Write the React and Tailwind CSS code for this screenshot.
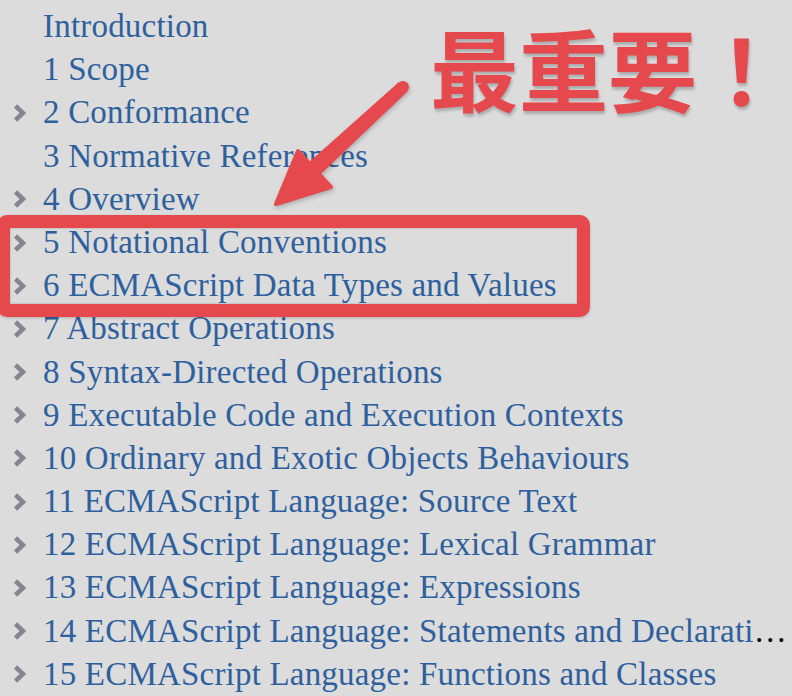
// Table of contents with a red "最重要！" call-out drawn over it:
// a pointing arrow and a box round sections 5 and 6.

const ITEMS = [
  { label: "Introduction", folder: false },
  { label: "1 Scope", folder: false },
  { label: "2 Conformance", folder: true },
  { label: "3 Normative References", folder: false },
  { label: "4 Overview", folder: true },
  { label: "5 Notational Conventions", folder: true },
  { label: "6 ECMAScript Data Types and Values", folder: true },
  { label: "7 Abstract Operations", folder: true },
  { label: "8 Syntax-Directed Operations", folder: true },
  { label: "9 Executable Code and Execution Contexts", folder: true },
  { label: "10 Ordinary and Exotic Objects Behaviours", folder: true },
  { label: "11 ECMAScript Language: Source Text", folder: true },
  { label: "12 ECMAScript Language: Lexical Grammar", folder: true },
  { label: "13 ECMAScript Language: Expressions", folder: true },
  { label: "14 ECMAScript Language: Statements and Declarations", folder: true },
  { label: "15 ECMAScript Language: Functions and Classes", folder: true },
];

function Chevron() {
  return (
    <svg width="16" height="20" viewBox="0 0 16 20" className="block">
      <path d="M3.5 3 L11 10 L3.5 17" fill="none" stroke="#86848f" strokeWidth="4.5" />
    </svg>
  );
}

function Arrow() {
  return (
    <svg
      width="792"
      height="696"
      viewBox="0 0 792 696"
      className="absolute left-0 top-0 pointer-events-none drop-shadow-[1px_2px_2px_rgba(0,0,0,0.22)]"
    >
      <g fill="#e5484d" stroke="#e5484d" strokeLinejoin="round">
        <polygon points="398.9,82.6 407,91.4 319.4,174.9 308.6,163.1" strokeWidth="1" />
        <circle cx="403" cy="87" r="6" stroke="none" />
        <polygon points="276,204 331,187 298,151" strokeWidth="4" />
      </g>
    </svg>
  );
}

export default function App() {
  return (
    <div className="relative w-[792px] h-[696px] overflow-hidden bg-[#dcdcdc] font-['Liberation_Serif',serif]">
      <ul className="w-[790px] pt-[5px]">
        {ITEMS.map((item) => (
          <li key={item.label} className="flex items-center h-[43.2px] text-[33px] leading-[43.2px]">
            <span className="w-[43px] shrink-0 pl-[12px]">{item.folder && <Chevron />}</span>
            <span className="flex-1 min-w-0 truncate text-black tracking-[0.2px]">
              <span className="text-[#2e609d]">{item.label}</span>
            </span>
          </li>
        ))}
      </ul>

      {/* annotation overlay */}
      <div className="absolute left-[-3px] top-[215px] w-[593px] h-[102px] border-[13px] border-[#e5484d] rounded-[10px] shadow-[inset_0_0_2px_rgba(0,0,0,0.3),0_1px_3px_rgba(0,0,0,0.2)]" />
      <Arrow />
      <div className="absolute left-[430px] top-[22px] w-[360px] whitespace-nowrap text-[89px] leading-none font-bold text-[#e5484d] font-['Noto_Sans_CJK_JP',sans-serif] [text-shadow:1px_3px_3px_rgba(0,0,0,0.22)]">
        最重要！
      </div>
    </div>
  );
}
